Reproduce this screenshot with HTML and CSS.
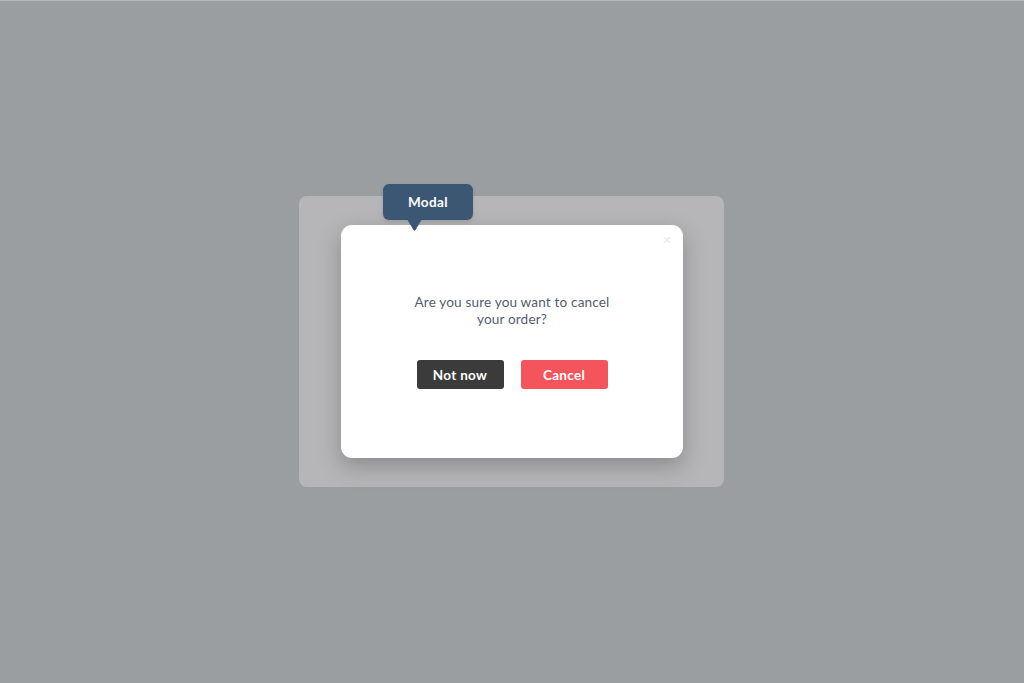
FILE: index.html
```html
<!DOCTYPE html>
<html>
<head>
<meta charset="utf-8">
<link rel="stylesheet" href="styles.css">
</head>
<body>
<div class="stage">
  <div class="panel">
    <div class="tip">Modal</div>
    <div class="modal">
      <span class="close">&#x2715;</span>
      <p class="msg">Are you sure you want to cancel<br>your order?</p>
      <div class="actions">
        <button class="btn btn-dark">Not now</button>
        <button class="btn btn-red">Cancel</button>
      </div>
    </div>
  </div>
</div>
</body>
</html>
```
FILE: styles.css
```css
html, body {
  margin: 0;
  padding: 0;
  height: 100%;
}
body {
  background: #9b9ea1;
  font-family: "Lato", "Open Sans", sans-serif;
  border-top: 1px solid #b4b6b8;
  box-sizing: border-box;
}
.stage {
  height: 682px;
  display: flex;
  align-items: center;
  justify-content: center;
}
.panel {
  position: relative;
  background: #b6b6b8;
  border-radius: 8px;
  padding: 29px 41px 29px 42px;
  margin-left: -1px;
  margin-top: -1px;
}
.tip {
  position: absolute;
  left: 84px;
  top: -12px;
  width: 90px;
  height: 36px;
  box-sizing: border-box;
  background: #3b5773;
  color: #fff;
  font-weight: 700;
  font-size: 13.5px;
  letter-spacing: 0.4px;
  border-radius: 6px;
  display: flex;
  align-items: center;
  justify-content: center;
  z-index: 2;
  box-shadow: 0 2px 4px rgba(0,0,0,0.12);
}
.tip::after {
  content: "";
  position: absolute;
  left: 24px;
  top: 35px;
  width: 15px;
  height: 12px;
  background: #3b5773;
  clip-path: polygon(0 0, 100% 0, 60% 85%, 50% 100%, 40% 85%);
}
.modal {
  position: relative;
  width: 342px;
  height: 233px;
  box-sizing: border-box;
  background: #fff;
  border-radius: 11px;
  box-shadow: 0 8px 22px rgba(60,60,70,0.35);
  display: flex;
  flex-direction: column;
  align-items: center;
  justify-content: center;
}
.close {
  position: absolute;
  right: 12px;
  top: 8px;
  font-size: 11px;
  color: #e6e6e6;
}
.msg {
  margin: 0;
  text-align: center;
  font-size: 13.6px;
  line-height: 17px;
  color: #535e6d;
  letter-spacing: 0.15px;
}
.actions {
  display: flex;
  gap: 17px;
  margin-top: 32px;
}
.btn {
  width: 87px;
  height: 29px;
  border: none;
  border-radius: 3px;
  color: #fff;
  font-family: "Lato", "Open Sans", sans-serif;
  font-weight: 700;
  font-size: 13.5px;
  letter-spacing: 0.3px;
  padding: 0;
}
.btn-dark { background: #3b3b3c; }
.btn-red { background: #f4545b; }
```
